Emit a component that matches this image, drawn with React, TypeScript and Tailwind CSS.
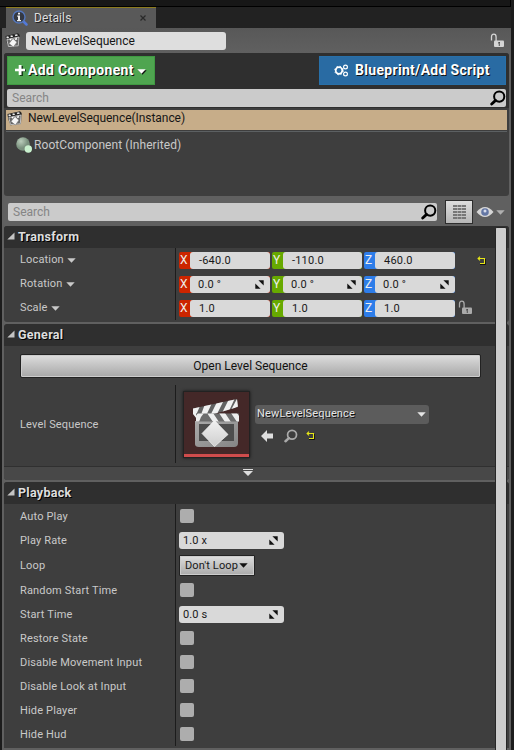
import React from "react";

const Clapper = ({ className = "" }: { className?: string }) => (
  <svg viewBox="0 0 15 15" className={`h-[15px] w-[15px] shrink-0 ${className}`}>
    <path d="M.5 3 13 .3l1.700 1.700-.8 11-10.400 1.200L1.200 8z" fill="#222" />
    <path d="m1.300 3.800 1.800-.5 1 1.500-2.300.8zM5.200 2.700l2-.4.9 1.500-2.200.5zM9.600 1.800l2.500-.6.8 1.400-2.400.6z" fill="#eee" />
    <path d="M1.800 6.500 14 4l-.7 8.800-9.800.8z" fill="#666" stroke="#cfcfcf" strokeWidth=".9" />
    <path d="m4.300 6.300 1.600-.5 1 1.200-1.700.6zM9.800 5.500l2-.4.5 1.300-2 .5z" fill="#fff" />
    <path d="m8 5.500 3.900 3.700-3.500 4.800L4 10.500z" fill="#f6f6f6" stroke="#666" strokeWidth=".5" />
  </svg>
);

const Lock = ({ className = "" }: { className?: string }) => (
  <svg viewBox="0 0 14 15" className={`h-[15px] w-[14px] shrink-0 ${className}`}>
    <path d="M1.500 7.500V4Q1.500 1.200 3.800 1.200T6.100 4v4" fill="none" stroke="currentColor" strokeWidth="1.300" />
    <rect x="4" y="7.500" width="10" height="6.500" rx="1" fill="currentColor" />
    <path d="M8.300 9h1.700v1.700H8.300zM8.700 11.300H10v1.400H8.700z" fill="#4c4c4c" />
  </svg>
);

const Magnifier = ({ className = "" }: { className?: string }) => (
  <svg viewBox="0 0 16 16" className={`shrink-0 ${className}`} fill="none" stroke="currentColor">
    <circle cx="9.2" cy="6.6" r="5.1" strokeWidth="2" />
    <path d="m5.6 10.4-3.9 3.6" strokeWidth="2.8" strokeLinecap="round" />
  </svg>
);

const Caret = ({ className = "" }: { className?: string }) => (
  <svg viewBox="0 0 9 5" className={`h-[5px] w-[9px] shrink-0 ${className}`}>
    <path d="M.3.3h8.400L4.500 4.700z" fill="currentColor" />
  </svg>
);

const Spin = () => (
  <svg viewBox="0 0 9 9" className="ml-auto h-[9px] w-[9px] shrink-0 text-[#111]">
    <path d="M3.4.3h5.300v5.300zM.3 3.400v5.300h5.300z" fill="currentColor" />
  </svg>
);

const Reset = () => (
  <svg viewBox="0 0 9 9" className="h-[9px] w-[9px] shrink-0" fill="none">
    <path d="M3 8.500h5.500V3" stroke="#111" />
    <path d="M1 2.500h6.500v5H3M3 .7 1.100 2.500 3 4.300" stroke="#e6e617" strokeWidth="1.100" />
  </svg>
);

const SectionHeader = ({ title }: { title: string }) => (
  <div className="flex h-[22px] items-center rounded-t-[3px] bg-[#2f2f2f] pl-[3px]">
    <svg viewBox="0 0 8 8" className="mb-[2px] h-[8px] w-[8px]">
      <path d="M7.500.5v7H.3z" fill="#c4c4c4" />
    </svg>
    <h2 className="ml-[3px] text-[12.5px] leading-[22px] font-bold tracking-[0.28px] text-[#dedede] [text-shadow:1px_1px_0_#000]">{title}</h2>
  </div>
);

const Label = ({ children, caret }: { children: string; caret?: boolean }) => (
  <div className={`flex w-[172px] shrink-0 items-center border-r border-[#1c1c1c] pl-[16px] text-[11px] tracking-[0.16px] text-[#c9c9c9] ${caret ? "" : "pt-[2px]"}`}>
    {children}
    {caret && <Caret className="mt-[1px] ml-[3px] text-[#c9c9c9]" />}
  </div>
);

const axes = [
  { axis: "X", color: "bg-[#cc2500]", width: "w-[91px]" },
  { axis: "Y", color: "bg-[#67a900]", width: "w-[90px]" },
  { axis: "Z", color: "bg-[#2d7de9]", width: "w-[91px]" },
];

const Vector = ({ values, spin }: { values: string[]; spin?: boolean }) => (
  <div className="ml-[3px] flex items-center gap-[2px]">
    {axes.map((a, i) => (
      <div key={a.axis} className={`flex h-[17px] rounded-[2px] ${a.color} ${a.width}`}>
        <span className="w-[11px] pl-[1px] text-[12px] leading-[17px] text-[#eee]">{a.axis}</span>
        <div className={`flex flex-1 items-center rounded-[3px] bg-[#d9d9d9] pr-[6px] text-[11px] tracking-[0.2px] text-[#181818] ${spin ? "pl-[8px]" : "pl-[9px]"}`}>
          <span className="pt-[1px] leading-[16px]">{values[i]}</span>
          {spin && <Spin />}
        </div>
      </div>
    ))}
  </div>
);

const NumberBox = ({ value }: { value: string }) => (
  <div className="ml-[3px] flex h-[17px] w-[105px] items-center rounded-[3px] bg-[#d9d9d9] pr-[6px] pl-[4px] text-[11px] tracking-[0.1px] text-[#181818]">
    <span className="pt-[1px] leading-[16px]">{value}</span>
    <Spin />
  </div>
);

const Check = () => <div className="ml-[4px] h-[14px] w-[14px] rounded-[2px] bg-[#adadad]" />;

const playback: { name: string; value?: string; loop?: boolean }[] = [
  { name: "Auto Play" },
  { name: "Play Rate", value: "1.0 x" },
  { name: "Loop", loop: true },
  { name: "Random Start Time" },
  { name: "Start Time", value: "0.0 s" },
  { name: "Restore State" },
  { name: "Disable Movement Input" },
  { name: "Disable Look at Input" },
  { name: "Hide Player" },
  { name: "Hide Hud" },
];

const Thumbnail = () => (
  <div className="ml-[7px] flex h-[67px] w-[67px] flex-col border border-[#222] bg-[#442828] shadow-[0_0_3px_#151515]">
    <svg viewBox="0 0 65 62" className="h-[62px] w-[65px]">
      <defs>
        <linearGradient id="slate" x2="1" y2="1">
          <stop stopColor="#aaa" />
          <stop offset="1" stopColor="#858585" />
        </linearGradient>
        <linearGradient id="gem" x2="0" y2="1">
          <stop stopColor="#f1f1f1" />
          <stop offset="1" stopColor="#cecece" />
        </linearGradient>
        <clipPath id="arm"><path d="M9 16.500 53 7l1 8-41 12-4-5z" /></clipPath>
        <clipPath id="bar"><path d="M12 21.500h43v8H12z" /></clipPath>
      </defs>
      <path d="M11 29h43v22q0 4-4 4H15q-4 0-4-3z" fill="url(#slate)" />
      <path d="M15 32h35v17H15z" fill="#4d4d4d" />
      <g clipPath="url(#arm)">
        <path d="M8 5h50v26H8z" fill="#626262" />
        <path d="m9 15 7-1-3.500 8 3 6-4 1-3-7zM21 12l7-1-7 15-6 2zM33 10l7-2-7 14-7 2zM45 7l6-1-6 13-7 2zM54 5l3 8-10 5z" fill="#f1f1f1" />
      </g>
      <g clipPath="url(#bar)">
        <path d="M11 21h45v9H11z" fill="#6c6c6c" />
        <path d="m14 21-3 4v5h4l2-5 3-4zM23 21l6 9h6l-6-9zM35 21l6 9h6l-6-9zM47 21l6 9h6l-6-9z" fill="#eee" />
      </g>
      <path d="m30.500 28.500 13.500 14-13.500 12-12.500-13z" fill="url(#gem)" stroke="#f5f5f5" strokeWidth=".7" />
    </svg>
    <div className="h-[3px] bg-[#cf4c4c]" />
  </div>
);

export default function App() {
  return (
    <div className="h-[750px] w-[514px] overflow-hidden bg-[#1c1c1c] font-['Roboto',sans-serif] whitespace-pre">
      <div className="h-[7px] w-[511px] border-r border-b border-black bg-[#171717]" />
      <div className="h-[21px] w-[511px] bg-[#222] pl-[6px]">
        <div className="flex h-[21px] w-[150px] items-center border-t border-[#8c7b1e] bg-[#595959] pl-[6px]">
          <svg viewBox="0 0 16 16" className="h-[16px] w-[16px]">
            <path d="m11.5 11.5 3 3" stroke="#5279d8" strokeWidth="2.5" strokeLinecap="round" />
            <circle cx="7" cy="7" r="6" fill="#343943" stroke="#5477bd" strokeWidth="1.4" />
            <path d="M6 2.8h2v1.7H6zM5.2 5.6H8v4.5h1v1.2H5v-1.2h1V6.8h-.8z" fill="#eee" />
          </svg>
          <span className="-mt-[1px] ml-[6px] text-[12px] tracking-[0.1px] text-[#ddd] [text-shadow:1px_1px_0_#222]">Details</span>
          <svg viewBox="0 0 6 6" className="mr-[10px] ml-auto h-[6px] w-[6px]">
            <path d="m.5.5 5 5m0-5-5 5" stroke="#292929" strokeWidth="1.2" />
          </svg>
        </div>
      </div>

      <main className="relative ml-[2px] h-[722px] w-[509px] bg-[#606060]">
        <div className="flex h-[25px] items-center bg-linear-to-b from-[#585858] to-[#606060] pl-[3px]">
          <Clapper />
          <div className="ml-[6px] h-[18px] w-[200px] rounded-[3px] bg-[#dedede] pl-[5px] text-[12px] leading-[18px] tracking-[-0.03px] text-[#161616]">NewLevelSequence</div>
          <Lock className="mr-[7px] ml-auto text-[#d5d5d5]" />
        </div>

        <section className="ml-[2px] h-[143px] w-[505px] overflow-hidden rounded-[3px] bg-[#3e3e3e]">
          <div className="h-[55px] bg-[#2f2f2f] pt-[3px] pl-[3px]">
            <div className="flex h-[29px] w-[499px] justify-between text-white">
              <button className="flex w-[148px] items-center border border-[#3f9942] bg-[#4fa550] pl-[7px]">
                <svg viewBox="0 0 11 11" className="h-[11px] w-[11px]">
                  <path d="M5 1h3v3.5h3v2H8V11H5z" fill="#173b18" />
                  <path d="M3.700 0h2.800v3.700H10v2.600H6.500V10H3.700V6.300H0V3.700h3.700z" fill="#fff" />
                </svg>
                <span className="ml-[2px] text-[14px] font-bold tracking-[0.32px] [text-shadow:1px_1px_0_#111]">Add Component</span>
                <Caret className="mt-[2px] ml-[3px] drop-shadow-[1px_1px_0_#111]" />
              </button>
              <button className="flex w-[187px] items-center border border-[#2870a9] bg-[#296ba3] pl-[14px]">
                <svg viewBox="0 0 15 13" className="h-[13px] w-[15px]" fill="none" stroke="#fff">
                  <circle cx="5" cy="6.500" r="3.300" strokeWidth="1.700" />
                  <circle cx="5" cy="6.500" r="4.300" strokeWidth="1" strokeDasharray="1.500 1.900" />
                  <circle cx="11.500" cy="3" r="1.900" strokeWidth="1.200" />
                  <circle cx="11.500" cy="10" r="1.900" strokeWidth="1.200" />
                </svg>
                <span className="ml-[6px] text-[14px] font-bold tracking-[0.31px] [text-shadow:1px_1px_0_#111]">Blueprint/Add Script</span>
              </button>
            </div>
            <div className="mt-[4px] flex h-[18px] w-[499px] items-center rounded-[2px] bg-[#cbcbcb] pl-[5px] text-[12px] text-[#858585]">
              Search
              <Magnifier className="ml-auto h-[16px] w-[16px] text-black" />
            </div>
          </div>
          <div className="mt-[2px] ml-[2px] flex h-[20px] w-[501px] items-center bg-[#c7ad89] pl-[1px] text-[12px] text-[#161616]">
            <Clapper className="-mt-[3px]" />
            <span className="-mt-[4px] ml-[6px] tracking-[-0.05px]">NewLevelSequence(Instance)</span>
          </div>
          <div className="mx-[2px] mt-px h-px bg-[#5c6062]" />
          <div className="flex h-[26px] items-center pl-[12px] text-[12px] text-[#c9c9c9]">
            <svg viewBox="0 0 16 16" className="h-[16px] w-[16px]">
              <defs>
                <radialGradient id="ball" cx=".35" cy=".3">
                  <stop stopColor="#bacdbb" />
                  <stop offset="1" stopColor="#7a917e" />
                </radialGradient>
              </defs>
              <circle cx="7" cy="7" r="6.800" fill="url(#ball)" />
              <circle cx="12.300" cy="12" r="3.700" fill="#c9f1ce" />
            </svg>
            <span className="ml-[2px] tracking-[0.07px]">RootComponent (Inherited)</span>
          </div>
        </section>

        <div className="flex h-[30px] items-start pl-[6px]">
          <div className="mt-[7px] flex h-[18px] w-[429px] items-center rounded-[2px] bg-[#cbcbcb] pl-[5px] text-[12px] text-[#858585]">
            Search
            <Magnifier className="ml-auto h-[16px] w-[16px] text-black" />
          </div>
          <button className="mt-[4px] ml-[8px] flex h-[24px] w-[28px] items-center justify-center border border-[#2d2d2d] bg-linear-to-b from-[#ddd] to-[#b7b7b7]">
            <svg viewBox="0 0 13 14" className="h-[14px] w-[13px]" fill="none" stroke="#777" strokeWidth="2">
              <path d="M0 1h13M0 4h13M0 7h13M0 10h13M0 13h13" strokeDasharray="4 .5" />
            </svg>
          </button>
          <svg viewBox="0 0 18 12" className="mt-[10px] ml-[3px] h-[12px] w-[18px]">
            <path d="M.5 6Q9-4 17.500 6 9 16 .5 6" fill="#d6d6d6" />
            <circle cx="9" cy="6" r="3.800" fill="#6477a4" />
            <circle cx="9" cy="5" r="1.500" fill="#d6dcec" />
          </svg>
          <Caret className="mt-[14px] ml-[2px] text-[#b0b0b0]" />
        </div>

        <div className="ml-[2px] w-[505px]">
          <section className="h-[96px] rounded-[3px] bg-[#3e3e3e]">
            <SectionHeader title="Transform" />
            <div className="flex h-[24px]">
              <Label caret>Location</Label>
              <Vector values={["-640.0", "-110.0", "460.0"]} />
              <div className="ml-[22px] flex items-center"><Reset /></div>
            </div>
            <div className="flex h-[24px]">
              <Label caret>Rotation</Label>
              <Vector values={["0.0 °", "0.0 °", "0.0 °"]} spin />
            </div>
            <div className="flex h-[24px]">
              <Label caret>Scale</Label>
              <Vector values={["1.0", "1.0", "1.0"]} />
              <Lock className="mt-[4px] ml-[3px] text-[#aaa]" />
            </div>
          </section>

          <section className="mt-[2px] h-[156px] overflow-hidden rounded-[3px] bg-[#3e3e3e]">
            <SectionHeader title="General" />
            <button className="mt-[8px] ml-[16px] flex h-[24px] w-[461px] items-center justify-center rounded-[2px] border border-[#222] bg-linear-to-b from-[#dedede] to-[#a7a7a7] text-[12px] text-[#111] shadow-[inset_0_0_0_1px_#ccc]">
              Open Level Sequence
            </button>
            <div className="mt-[7px] flex h-[78px] items-stretch">
              <Label>Level Sequence</Label>
              <div className="flex items-center pt-px"><Thumbnail /></div>
              <div className="ml-[5px] pt-[20px]">
                <div className="flex h-[19px] w-[174px] items-center rounded-[3px] bg-[#5c5c5c] pr-[3px] pl-[2px] text-[11px] tracking-[0.15px] text-[#e5e5e5] [text-shadow:1px_1px_0_#111]">
                  <span>NewLevelSequence</span>
                  <Caret className="ml-auto text-[#e5e5e5]" />
                </div>
                <div className="mt-[5px] flex h-[13px] items-center pl-[6px]">
                  <svg viewBox="0 0 12 12" className="h-[12px] w-[12px]">
                    <path d="m0 6 6-6v3.500h6v5H6V12z" fill="#dedede" />
                  </svg>
                  <Magnifier className="ml-[11px] h-[14px] w-[14px] text-[#aaa]" />
                  <div className="ml-[8px]"><Reset /></div>
                </div>
              </div>
            </div>
            <div className="mt-[3px] flex h-[14px] justify-center border-t border-[#303030] bg-[#484848] pt-[2px] pr-[17px]">
              <svg viewBox="0 0 10 7" className="h-[7px] w-[10px]">
                <path d="M0 0h10v1H0zM0 2h10L5 7z" fill="#ddd" />
              </svg>
            </div>
          </section>

          <section className="mt-[2px] h-[266px] rounded-t-[3px] bg-[#3e3e3e]">
            <SectionHeader title="Playback" />
            {playback.map((p) => (
              <div key={p.name} className={p.loop ? "flex h-[26px]" : "flex h-[24px]"}>
                <Label>{p.name}</Label>
                <div className="flex items-center">
                  {p.loop ? (
                    <button className="ml-[3px] flex h-[21px] w-[76px] items-center rounded-[1px] border border-[#222] bg-linear-to-b from-[#dedede] to-[#aaa] pl-[5px] text-[11px] tracking-[0.1px] text-[#181818] shadow-[inset_0_0_0_1px_#ccc]">
                      <span className="pt-[2px]">Don't Loop</span>
                      <Caret className="ml-[1px] text-[#111]" />
                    </button>
                  ) : p.value ? (
                    <NumberBox value={p.value} />
                  ) : (
                    <Check />
                  )}
                </div>
              </div>
            ))}
          </section>
        </div>
        <div className="absolute top-[199px] left-[493px] h-[523px] w-[12px] rounded-t-[2px] border-x border-t border-[#272727] bg-[#cdcdcd]" />
      </main>
    </div>
  );
}
